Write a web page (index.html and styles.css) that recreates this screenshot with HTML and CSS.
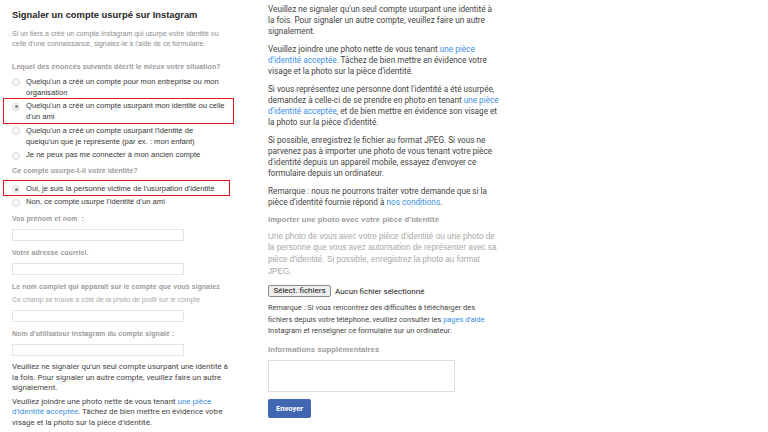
FILE: index.html
```html
<!DOCTYPE html>
<html lang="fr">
<head>
<meta charset="utf-8">
<title>Signaler un compte usurpé sur Instagram</title>
<link rel="stylesheet" href="styles.css">
</head>
<body>
<div class="page">
  <div class="col left">
    <h1 class="title">Signaler un compte usurpé sur Instagram</h1>
    <p class="intro">Si un tiers a créé un compte Instagram qui usurpe votre identité ou celle d'une connaissance, signalez-le à l'aide de ce formulaire.</p>

    <div class="q q1">Lequel des énoncés suivants décrit le mieux votre situation?</div>
    <div class="opts">
      <div class="opt"><span class="radio"></span><span class="opt-text">Quelqu'un a créé un compte pour mon entreprise ou mon organisation</span></div>
      <div class="opt mark mark1"><span class="radio on"></span><span class="opt-text">Quelqu'un a créé un compte usurpant mon identité ou celle d'un ami</span></div>
      <div class="opt"><span class="radio"></span><span class="opt-text">Quelqu'un a créé un compte usurpant l'identité de quelqu'un&nbsp;que je représente (par ex. : mon enfant)</span></div>
      <div class="opt"><span class="radio"></span><span class="opt-text">Je ne peux pas me connecter à mon ancien compte</span></div>
    </div>

    <div class="q q2">Ce compte usurpe-t-il votre identité?</div>
    <div class="opts opts2">
      <div class="opt mark mark2"><span class="radio on"></span><span class="opt-text">Oui, je suis la personne victime de l'usurpation d'identité</span></div>
      <div class="opt"><span class="radio"></span><span class="opt-text">Non, ce compte usurpe l'identité d'un ami</span></div>
    </div>

    <div class="field first">
      <div class="flabel">Vos prénom et nom&nbsp; :</div>
      <div class="input"></div>
    </div>
    <div class="field">
      <div class="flabel">Votre adresse courriel.</div>
      <div class="input"></div>
    </div>
    <div class="field">
      <div class="flabel">Le nom complet qui apparaît sur le compte que vous signalez</div>
      <div class="fhint">Ce champ se trouve à côté de la photo de profil sur le compte</div>
      <div class="input"></div>
    </div>
    <div class="field">
      <div class="flabel">Nom d'utilisateur Instagram du compte signalé :</div>
      <div class="input"></div>
    </div>

    <p class="lp">Veuillez ne signaler qu'un seul compte usurpant une identité à la&nbsp;fois. Pour signaler un autre compte, veuillez faire un autre signalement.</p>
    <p class="lp">Veuillez joindre une photo nette de vous tenant <a class="link" href="#">une pièce d'identité acceptée</a>. Tâchez de bien mettre en évidence votre visage et la photo sur la pièce d'identité.</p>
    <p class="lp">Si vous représentez une personne dont l'identité a été usurpée, demandez à celle-ci de se prendre en photo en tenant <a class="link" href="#">une pièce d'identité acceptée</a>, et de bien mettre en évidence son visage et la photo sur la pièce d'identité.</p>
  </div>

  <div class="col right">
    <p class="rp">Veuillez ne signaler qu'un seul compte usurpant une identité à la&nbsp;fois. Pour signaler un autre compte, veuillez faire un autre signalement.</p>
    <p class="rp">Veuillez joindre une photo nette de vous tenant <a class="link" href="#">une pièce d'identité acceptée</a>. Tâchez de bien mettre en évidence votre visage et la photo sur la pièce d'identité.</p>
    <p class="rp">Si vous représentez une personne dont l'identité a été usurpée, demandez à celle-ci de se prendre en photo en tenant <a class="link" href="#">une pièce d'identité acceptée</a>, et de bien mettre en évidence son visage et la photo sur la pièce d'identité.</p>
    <p class="rp">Si possible, enregistrez le fichier au format JPEG. Si vous ne parvenez pas à importer une photo de vous tenant votre pièce d'identité depuis un appareil mobile, essayez d'envoyer ce formulaire depuis un ordinateur.</p>
    <p class="rp">Remarque : nous ne pourrons traiter votre demande que si la pièce d'identité fournie répond à <a class="link" href="#">nos conditions</a>.</p>

    <div class="rlabel">Importer une photo avec votre pièce d'identité</div>
    <p class="ghint">Une photo de vous avec votre pièce d'identité ou une photo de la personne que vous avez autorisation de représenter avec sa pièce d'identité. Si possible, enregistrez la photo au format JPEG.</p>
    <div class="filerow">
      <span class="filebtn">Sélect. fichiers</span>
      <span class="filename">Aucun fichier sélectionné</span>
    </div>
    <p class="note">Remarque : Si vous rencontrez des difficultés à télécharger des fichiers depuis votre téléphone, veuillez consulter les <a class="link" href="#">pages d'aide</a> Instagram et renseigner ce formulaire sur un ordinateur.</p>

    <div class="rlabel rlabel2">Informations supplémentaires</div>
    <div class="textarea"></div>
    <div class="submit">Envoyer</div>
  </div>
</div>
</body>
</html>
```

FILE: styles.css
```css
html, body {
  margin: 0;
  padding: 0;
  background: #ffffff;
}

body {
  width: 768px;
  height: 432px;
  overflow: hidden;
  font-family: "Liberation Sans", Arial, sans-serif;
  color: #262626;
}

.page {
  display: flex;
  align-items: flex-start;
  padding-left: 12px;
}

.col {
  flex: none;
}

.left {
  width: 232px;
}

.right {
  width: 234px;
  margin-left: 24px;
}

/* ---------- left column ---------- */

.title {
  margin: 9px 0 0;
  font-size: 9.4px;
  line-height: 12px;
  font-weight: bold;
  color: #262626;
}

.intro {
  width: 212px;
  margin: 8px 0 0;
  font-size: 7px;
  line-height: 10px;
  color: #8e8e8e;
}

.q {
  font-size: 7px;
  line-height: 10px;
  font-weight: bold;
  color: #9b9b9b;
  letter-spacing: 0.1px;
}

.q1 {
  margin-top: 13px;
}

.q2 {
  margin-top: 5px;
}

.opts {
  margin-top: 2px;
}

.opts2 {
  margin-top: 5px;
}

.opt {
  display: flex;
  align-items: flex-start;
  margin-left: -8px;
  padding: 1.5px 0 1px 8px;
  font-size: 7.6px;
  line-height: 11px;
  color: #363636;
}

.opt-text {
  max-width: 202px;
}

.radio {
  flex: none;
  position: relative;
  width: 6px;
  height: 6px;
  margin: 2.5px 6px 0 0;
  border: 1px solid #d9d9d9;
  border-radius: 50%;
  background: #f7f7f7;
}

.radio.on::after {
  content: "";
  position: absolute;
  left: 1.5px;
  top: 1.5px;
  width: 3px;
  height: 3px;
  border-radius: 50%;
  background: #7a7a7a;
}

.mark {
  border: 1px solid #e8141c;
  margin-left: -9px;
  margin-top: -1px;
  margin-bottom: -1px;
}

.mark1 {
  width: 221px;
}

.mark2 {
  width: 217px;
}

.field {
  margin-top: 7px;
}

.field.first {
  margin-top: 6px;
}

.flabel {
  font-size: 6.9px;
  line-height: 10px;
  font-weight: bold;
  color: #9b9b9b;
  letter-spacing: 0.1px;
}

.fhint {
  margin-top: 3px;
  font-size: 6.9px;
  line-height: 10px;
  color: #a8a8a8;
}

.input {
  box-sizing: border-box;
  width: 172px;
  height: 12px;
  margin-top: 5px;
  border: 1px solid #e4e4e4;
  background: #ffffff;
}

.lp {
  width: 228px;
  margin: 6px 0 0;
  font-family: Roboto, "Liberation Sans", sans-serif;
  font-size: 7.9px;
  line-height: 10.7px;
  color: #444444;
}

.lp + .lp {
  margin-top: 2.5px;
}

.link {
  color: #3b8ee3;
  text-decoration: none;
}

/* ---------- right column ---------- */

.rp {
  margin: 0 0 7px;
  font-family: Roboto, "Liberation Sans", sans-serif;
  font-size: 8.2px;
  line-height: 11px;
  color: #444444;
}

.rp:first-child {
  margin-top: 3.5px;
}

.rlabel {
  margin-top: 4px;
  font-size: 7.6px;
  line-height: 10px;
  font-weight: bold;
  color: #9b9b9b;
  letter-spacing: 0.1px;
}

.ghint {
  margin: 6px 0 0;
  font-size: 8.2px;
  line-height: 11.7px;
  color: #a8a8a8;
}

.filerow {
  display: flex;
  align-items: center;
  margin-top: 8px;
  font-family: Roboto, "Liberation Sans", sans-serif;
  font-size: 8px;
  color: #222222;
}

.filebtn {
  box-sizing: border-box;
  width: 63px;
  height: 12px;
  line-height: 10px;
  text-align: center;
  border: 1px solid #8a8a8a;
  border-radius: 2px;
  background: #efefef;
  color: #111111;
}

.filename {
  margin-left: 4px;
}

.note {
  width: 222px;
  margin: 5px 0 0;
  font-family: Roboto, "Liberation Sans", sans-serif;
  font-size: 7.45px;
  line-height: 11.5px;
  color: #444444;
}

.rlabel2 {
  margin-top: 8px;
}

.textarea {
  box-sizing: border-box;
  width: 187px;
  height: 32px;
  margin-top: 5px;
  border: 1px solid #dedede;
  background: #ffffff;
}

.submit {
  box-sizing: border-box;
  width: 43px;
  height: 19px;
  margin-top: 7px;
  line-height: 19px;
  text-align: center;
  border-radius: 2px;
  background: #4267b2;
  color: #ffffff;
  font-family: Roboto, "Liberation Sans", sans-serif;
  font-size: 7.6px;
  font-weight: bold;
}
```
